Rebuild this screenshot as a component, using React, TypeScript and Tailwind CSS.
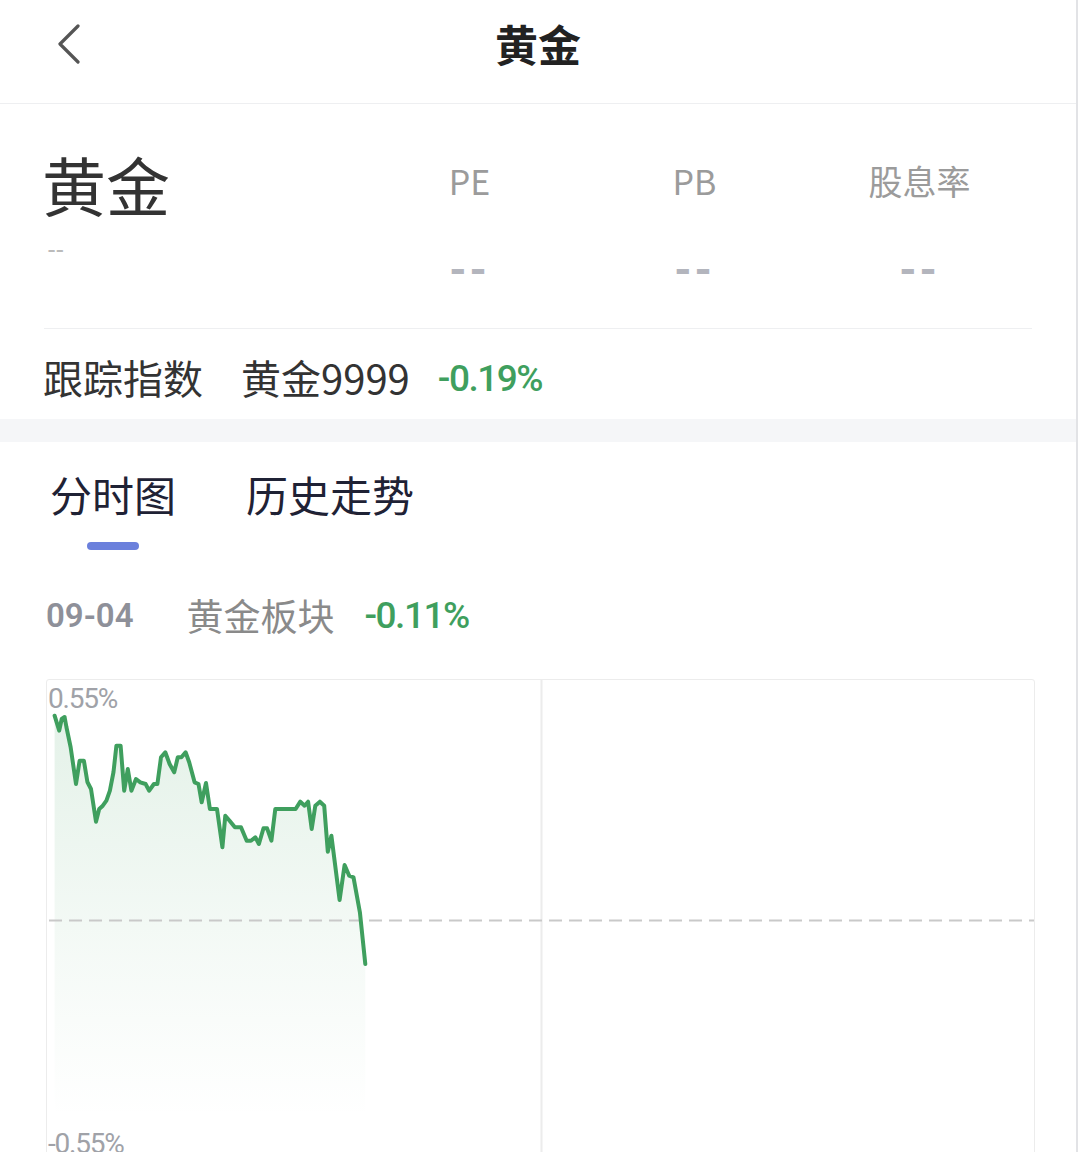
import React from "react";

const pts: [number, number][] = [
  [7.6, 35.7], [12.2, 50.7], [14.7, 39], [17.6, 37], [19.4, 47], [23.6, 67], [29, 104], [32.6, 80.7],
  [36.9, 80.7], [40.4, 102], [44, 109], [49, 141.7], [52.2, 129], [55.8, 125.7], [59.4, 120.7],
  [62.9, 110.7], [66.5, 92], [69.4, 65.7], [73.6, 65.7], [77.2, 110.7], [80.8, 89], [84.4, 110.7],
  [89, 99], [93.3, 102.3], [98.6, 104], [102.2, 110.7], [106.9, 104], [110.4, 104], [114, 77.3],
  [118.3, 72.3], [122.6, 84], [127.2, 92.3], [130.8, 77.3], [134.4, 77.3], [138.6, 72.3], [142.2, 82.3],
  [147.6, 102.3], [151.5, 104], [154.7, 122.3], [159, 103], [162.9, 129], [170, 129], [175.4, 167.3],
  [178.3, 135.7], [182.6, 140.7], [187.9, 147.3], [194, 147.3], [199.7, 160.7], [204, 160.7],
  [208.3, 157.3], [211.9, 164], [216.5, 148.3], [220.1, 148.3], [224.4, 160.7], [228.3, 129],
  [248.6, 129], [253.3, 121.7], [257.6, 125.7], [261.1, 121.7], [264.7, 149], [268.3, 125.7],
  [272.9, 121.7], [277.2, 125.7], [280.8, 171.7], [284.4, 155.7], [292.6, 220], [297.6, 185],
  [302.2, 195.7], [306.5, 197.3], [312.9, 232.3], [318.3, 284],
];

const line = pts.map((p, i) => `${i === 0 ? "M" : "L"}${p[0]},${p[1]}`).join(" ");
const area = `${line} L318.3,482 L7.6,482 Z`;

const cjk = { fontFamily: '"Noto Sans CJK SC", "Noto Sans", sans-serif' };
const num = { fontFamily: 'Roboto, "Noto Sans CJK SC", sans-serif' };

export default function App() {
  return (
    <div className="w-[1078px] h-[1152px] overflow-hidden bg-white border-r-2 border-[#e2e3e6]" style={cjk}>
      {/* Header */}
      <div className="relative flex h-[104px] items-start justify-center border-b border-[#eeeff1]">
        <div className="absolute left-[56px] top-[24px]">
          <svg width="26" height="40" viewBox="0 0 26 40" fill="none">
            <path d="M22 2 L4 20 L22 38" stroke="#555" strokeWidth="3.2" strokeLinecap="round" strokeLinejoin="round" />
          </svg>
        </div>
        <div className="pt-[22px] text-[43px] leading-none font-bold text-[#222]">黄金</div>
      </div>

      {/* Summary */}
      <div className="mx-[44px] h-[225px] border-b border-[#eeeff1] flex pt-[47px]">
        <div className="flex-1 flex flex-col">
          <div className="text-[64px] leading-none text-[#333] -ml-[2px]">黄金</div>
          <div className="mt-[22px] ml-[4px] text-[26px] leading-none text-[#bbb] tracking-[1px]" style={num}>--</div>
        </div>
        {["PE", "PB", "股息率"].map((l) => (
          <div key={l} className="w-[225px] flex flex-col items-center pt-[13px]">
            <div className="text-[34px] leading-none text-[#9b9b9b]">{l}</div>
            <div className="mt-[50px] text-[44px] leading-none font-bold text-[#b3b5bd] tracking-[3px]" style={num}>--</div>
          </div>
        ))}
      </div>

      {/* Track index */}
      <div className="px-[44px] h-[90px] pt-[28px] flex items-start text-[40px] leading-none text-[#333]">
        <span className="-ml-[1px]">跟踪指数</span>
        <span className="ml-[38px]">黄金9999</span>
        <span className="ml-[28px] text-[37px] mt-[3px] font-medium text-[#3f9f5e] tracking-[-1.5px]" style={num}>-0.19%</span>
      </div>
      <div className="h-[23px] bg-[#f5f6f8]" />

      {/* Tabs */}
      <div className="pl-[50px] pt-[31px] flex text-[42px] leading-none text-[#1f2235]">
        <div className="flex flex-col items-center">
          <span>分时图</span>
          <div className="mt-[27px] h-[8px] w-[52px] rounded-full bg-[#6b80dc]" />
        </div>
        <span className="ml-[70px]">历史走势</span>
      </div>

      <div className="pl-[46px] mt-[47px] flex items-center h-[36px] leading-none">
        <span className="text-[33px] font-semibold text-[#8e9099]" style={num}>09-04</span>
        <span className="ml-[53px] text-[37px] text-[#8a8a8a]">黄金板块</span>
        <span className="ml-[30px] text-[37px] font-medium text-[#3f9f5e] tracking-[-1.5px]" style={num}>-0.11%</span>
      </div>

      {/* Chart */}
      <div className="relative ml-[46px] mt-[46px] w-[989px] h-[482px] border border-[#ececec] rounded-[3px]">
        <svg width="989" height="482" viewBox="0 0 989 482" className="block">
          <defs>
            <linearGradient id="fillg" x1="0" y1="0" x2="0" y2="1">
              <stop offset="0%" stopColor="#3f9f5e" stopOpacity="0.14" />
              <stop offset="55%" stopColor="#3f9f5e" stopOpacity="0.05" />
              <stop offset="90%" stopColor="#3f9f5e" stopOpacity="0" />
            </linearGradient>
          </defs>
          <line x1="494.5" y1="0" x2="494.5" y2="482" stroke="#ececec" strokeWidth="2" />
          <path d={area} fill="url(#fillg)" />
          <line x1="2" y1="240.5" x2="987" y2="240.5" stroke="#c9c9c9" strokeWidth="2" strokeDasharray="13 7" />
          <path d={line} fill="none" stroke="#3f9f5e" strokeWidth="4" strokeLinejoin="round" strokeLinecap="round" />
        </svg>
        <div className="absolute left-[1px] top-[5px] text-[28px] leading-none text-[#a0a2a8] tracking-[-1.2px]" style={num}>0.55%</div>
        <div className="absolute left-[1px] top-[450px] text-[28px] leading-none text-[#a0a2a8] tracking-[-1.2px]" style={num}>-0.55%</div>
      </div>
    </div>
  );
}
